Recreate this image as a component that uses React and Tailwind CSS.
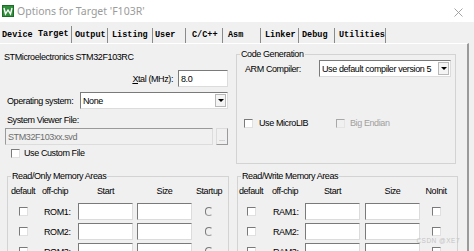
import React from "react";

const sunk =
  "bg-white border border-t-[#7a7a7a] border-l-[#7a7a7a] border-r-[#dcdcdc] border-b-[#dcdcdc]";

function Check({ disabled }) {
  return (
    <div
      className={
        disabled
          ? "w-[9px] h-[9px] shrink-0 border border-t-[#a8a8a8] border-l-[#a8a8a8] border-r-[#e4e4e4] border-b-[#e4e4e4] bg-[#f0f0f0]"
          : "w-[9px] h-[9px] shrink-0 border border-t-[#7a7a7a] border-l-[#7a7a7a] border-r-[#e0e0e0] border-b-[#e0e0e0] bg-white"
      }
    />
  );
}

function Radio() {
  return (
    <div className="w-[8px] h-[9px] rounded-full border border-t-[#7a7a7a] border-l-[#7a7a7a] border-b-[#9a9a9a] border-r-[#f0f0f0] bg-[#f0f0f0]" />
  );
}

function Arrow() {
  return (
    <div className="w-[11px] h-[13px] shrink-0 border border-[#b8b8b8] bg-[#f4f4f4] flex items-center justify-center">
      <div className="w-0 h-0 border-l-[3px] border-r-[3px] border-t-[3px] border-l-transparent border-r-transparent border-t-black" />
    </div>
  );
}

const tabs = [
  { t: "Device", c: "w-[36px] pl-[2px] h-[15px]" },
  { t: "Target", c: "w-[36px] pl-[2px] h-[17px] border-r border-[#8a8a8a]" },
  { t: "Output", c: "w-[36px] pl-[3px] h-[15px] border-r border-[#8a8a8a]" },
  { t: "Listing", c: "w-[45px] pl-[4px] h-[15px] border-r border-[#8a8a8a]" },
  { t: "User", c: "w-[33px] pl-[2px] h-[15px] border-r border-[#8a8a8a]" },
  { t: "C/C++", c: "w-[37px] pl-[6px] h-[15px] border-r border-[#8a8a8a]" },
  { t: "Asm", c: "w-[38px] pl-[5px] h-[15px] border-r border-[#8a8a8a]" },
  { t: "Linker", c: "w-[38px] pl-[4px] h-[15px] border-r border-[#8a8a8a]" },
  { t: "Debug", c: "w-[36px] pl-[3px] h-[15px] border-r border-[#8a8a8a]" },
  { t: "Utilities", c: "w-[51px] pl-[4px] h-[15px] border-r border-[#8a8a8a]" },
];

function Legend({ children }) {
  return (
    <legend className="ml-[3px] px-[1px] leading-[12px] text-black">
      {children}
    </legend>
  );
}

export default function App() {
  return (
    <div className="w-[474px] h-[251px] overflow-hidden bg-[#f0f0f0] relative flex flex-col font-['Liberation_Sans',Arial,sans-serif] text-[9px] tracking-[-0.4px] leading-[12px] text-black">
      {/* Title bar */}
      <div className="h-[22px] shrink-0 bg-white flex items-center pl-[2px] pr-[10px] tracking-normal">
        <svg width="12" height="12" viewBox="0 0 12 12" className="shrink-0">
          <rect x="0" y="0" width="12" height="12" fill="#2f8f3a" />
          <rect x="0.5" y="0.5" width="11" height="11" fill="none" stroke="#1d6b27" />
          <path d="M2 3 L3.5 9 L6 5 L8.5 9 L10 3" fill="none" stroke="#ffffff" strokeWidth="1.4" />
        </svg>
        <span className="ml-[3px] font-['Noto_Sans',sans-serif] text-[10.5px] text-[#9b9b9b]">
          Options for Target 'F103R'
        </span>
        <div className="flex-1" />
        <svg width="9" height="9" viewBox="0 0 9 9" className="mt-[2px] mr-[1px]">
          <path d="M0.5 0.5 L8.5 8.5 M8.5 0.5 L0.5 8.5" stroke="#9a9a9a" strokeWidth="0.9" />
        </svg>
      </div>

      {/* Tabs */}
      <div className="h-[21px] shrink-0 flex items-end font-['Liberation_Mono',monospace] font-bold text-[8.5px] tracking-normal leading-[13px]">
        {tabs.map((tb) => (
          <div key={tb.t} className={`${tb.c} shrink-0 flex items-center`}>
            {tb.t}
          </div>
        ))}
      </div>

      {/* Panel */}
      <div className="w-[469px] flex-1 border-t border-t-white border-r-2 border-r-[#9a9a9a] flex flex-col">
        <div className="flex">
          {/* Left column */}
          <div className="w-[228px] pl-[4px] flex flex-col">
            <div className="mt-[7px] h-[12px]">STMicroelectronics STM32F103RC</div>
            <div className="mt-[7px] h-[17px] flex items-center justify-end">
              <span className="mr-[5px]">
                <span className="underline">X</span>tal (MHz):
              </span>
              <div className={`w-[50px] h-[17px] ${sunk} pl-[2px] flex items-center`}>8.0</div>
            </div>
            <div className="mt-[5px] h-[17px] flex items-center">
              <span className="ml-[3px] w-[73px] whitespace-nowrap">Operating system:</span>
              <div className={`flex-1 h-[17px] ${sunk} flex items-center justify-between pl-[2px] pr-[1px]`}>
                <span>None</span>
                <Arrow />
              </div>
            </div>
            <div className="mt-[5px] h-[12px] pl-[3px]">System Viewer File:</div>
            <div className="mt-[2px] h-[17px] flex items-center gap-[3px]">
              <div className="ml-[1px] flex-1 h-[17px] bg-[#f0f0f0] border border-t-[#9a9a9a] border-l-[#9a9a9a] border-r-[#dcdcdc] border-b-[#dcdcdc] pl-[2px] flex items-center text-[#6d6d6d]">
                STM32F103xx.svd
              </div>
              <div className="w-[12px] h-[17px] border border-t-[#dcdcdc] border-l-[#dcdcdc] border-r-[#9a9a9a] border-b-[#9a9a9a] bg-[#f0f0f0] flex items-end justify-center text-[7px] leading-[10px] tracking-normal text-[#8a8a8a]">
                ...
              </div>
            </div>
            <div className="mt-[3px] h-[10px] flex items-center">
              <div className="ml-[7px]">
                <Check />
              </div>
              <span className="ml-[4px]">Use Custom File</span>
            </div>
          </div>

          {/* Code Generation */}
          <fieldset className="ml-[8px] mt-[4px] w-[220px] h-[116px] border border-[#d3d3d3]">
            <Legend>Code Generation</Legend>
            <div className="h-[17px] flex items-center pl-[8px]">
              <span className="w-[74px]">ARM Compiler:</span>
              <div className={`w-[132px] h-[17px] ${sunk} flex items-center justify-between pl-[2px] pr-[1px]`}>
                <span className="whitespace-nowrap">Use default compiler version 5</span>
                <Arrow />
              </div>
            </div>
            <div className="mt-[41px] h-[10px] flex items-center pl-[7px]">
              <Check />
              <span className="ml-[6px] w-[77px]">Use MicroLIB</span>
              <Check disabled />
              <span className="ml-[5px] text-[#a0a0a0]">Big Endian</span>
            </div>
          </fieldset>
        </div>

        {/* Memory areas */}
        <div className="flex mt-[6px]">
          <fieldset className="ml-[7px] w-[222px] h-[100px] border border-[#d3d3d3]">
            <Legend>Read/Only Memory Areas</Legend>
            <div className="mt-[3px] h-[12px] flex">
              <div className="w-[30px] text-center">default</div>
              <div className="w-[40px] pl-[4px]">off-chip</div>
              <div className="w-[55px] text-center">Start</div>
              <div className="w-[4px]" />
              <div className="w-[55px] text-center">Size</div>
              <div className="w-[34px] text-center">Startup</div>
            </div>
            {["ROM1:", "ROM2:", "ROM3:"].map((r, i) => (
              <div key={r} className={i === 0 ? "mt-[6px] h-[17px] flex items-center" : "mt-[3px] h-[17px] flex items-center"}>
                <div className="w-[30px] flex justify-center">
                  <Check />
                </div>
                <div className="w-[40px] pl-[6px]">{r}</div>
                <div className={`w-[55px] h-[17px] ${sunk}`} />
                <div className="w-[4px]" />
                <div className={`w-[55px] h-[17px] ${sunk}`} />
                <div className="w-[34px] flex justify-center">
                  <Radio />
                </div>
              </div>
            ))}
          </fieldset>

          <fieldset className="ml-[8px] w-[221px] h-[100px] border border-[#d3d3d3]">
            <Legend>Read/Write Memory Areas</Legend>
            <div className="mt-[3px] h-[12px] flex">
              <div className="w-[26px] text-center">default</div>
              <div className="w-[41px] pl-[8px]">off-chip</div>
              <div className="w-[55px] text-center">Start</div>
              <div className="w-[5px]" />
              <div className="w-[55px] text-center">Size</div>
              <div className="w-[32px] text-center">NoInit</div>
            </div>
            {["RAM1:", "RAM2:", "RAM3:"].map((r, i) => (
              <div key={r} className={i === 0 ? "mt-[6px] h-[17px] flex items-center" : "mt-[3px] h-[17px] flex items-center"}>
                <div className="w-[26px] flex justify-center">
                  <Check />
                </div>
                <div className="w-[41px] pl-[9px]">{r}</div>
                <div className={`w-[55px] h-[17px] ${sunk}`} />
                <div className="w-[5px]" />
                <div className={`w-[55px] h-[17px] ${sunk}`} />
                <div className="w-[32px] flex justify-center">
                  <Check />
                </div>
              </div>
            ))}
          </fieldset>
        </div>
      </div>

      <div className="absolute right-[14px] bottom-[6px] text-[6.5px] leading-[8px] tracking-[0.5px] text-[#c4c4c4] font-['Liberation_Sans',sans-serif]">
        CSDN @XE7
      </div>
    </div>
  );
}
